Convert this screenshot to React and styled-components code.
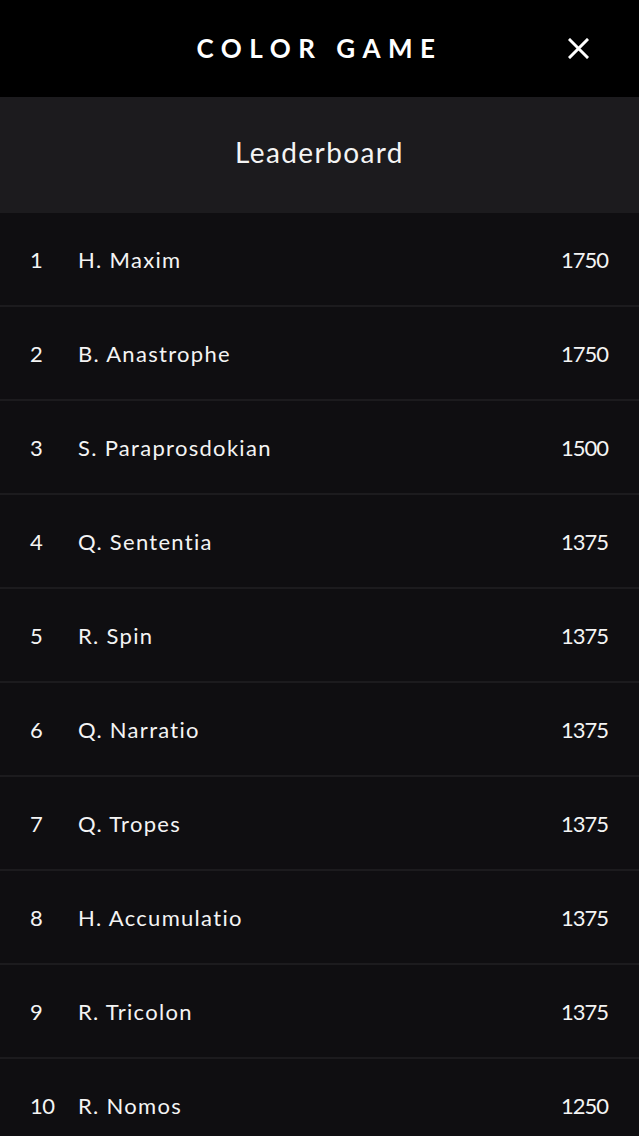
import React from 'react';
import styled, { createGlobalStyle } from 'styled-components';

const GlobalStyle = createGlobalStyle`
  html, body {
    margin: 0;
    padding: 0;
    background: #0f0e11;
  }
  body {
    font-family: Lato, "Open Sans", sans-serif;
    font-variant-ligatures: none;
    color: #f4f4f4;
  }
`

const Page = styled.div`
  width: 639px;
  min-height: 1136px;
  background: #0f0e11;
  overflow: hidden;
`

const TopBar = styled.header`
  height: 97px;
  background: #000;
  display: flex;
  align-items: center;
  justify-content: center;
  position: relative;
`

const Brand = styled.h1`
  margin: 0 0 2px 0;
  font-family: Lato, sans-serif;
  font-weight: 700;
  font-size: 26px;
  letter-spacing: 7.5px;
  color: #fff;
`

const CloseButton = styled.button`
  position: absolute;
  right: 50px;
  top: 38px;
  width: 21px;
  height: 21px;
  padding: 0;
  border: none;
  background: none;
  cursor: pointer;
  display: flex;
`

const Heading = styled.div`
  height: 116px;
  background: #1c1b1e;
  display: flex;
  align-items: center;
  justify-content: center;
`

const HeadingText = styled.h2`
  margin: 0 0 6px 0;
  font-family: Lato, sans-serif;
  font-weight: 400;
  font-size: 28px;
  letter-spacing: 1.4px;
  color: #f4f4f4;
`

const List = styled.ol`
  list-style: none;
  margin: 0;
  padding: 0;
`

const Row = styled.li`
  height: 92px;
  display: flex;
  align-items: center;
  padding: 0 31px 0 30px;
  background: #0f0e11;
  border-bottom: 2px solid #1c1b1e;
  font-size: 22px;
  color: #f4f4f4;
`

const Rank = styled.span`
  width: 48px;
  letter-spacing: -0.5px;
`

const Name = styled.span`
  flex: 1;
  letter-spacing: 1.3px;
`

const Score = styled.span`
  text-align: right;
  letter-spacing: -1px;
`

const players = [
  ['H. Maxim', 1750],
  ['B. Anastrophe', 1750],
  ['S. Paraprosdokian', 1500],
  ['Q. Sententia', 1375],
  ['R. Spin', 1375],
  ['Q. Narratio', 1375],
  ['Q. Tropes', 1375],
  ['H. Accumulatio', 1375],
  ['R. Tricolon', 1375],
  ['R. Nomos', 1250],
]

function CloseIcon() {
  return (
    <svg width="21" height="21" viewBox="0 0 21 21">
      <path d="M2 2 L19 19 M19 2 L2 19" stroke="#fff" strokeWidth="3" strokeLinecap="square" />
    </svg>
  )
}

export default function App() {
  return (
    <Page>
      <GlobalStyle />
      <TopBar>
        <Brand>COLOR GAME</Brand>
        <CloseButton aria-label="Close"><CloseIcon /></CloseButton>
      </TopBar>
      <Heading>
        <HeadingText>Leaderboard</HeadingText>
      </Heading>
      <List>
        {players.map(([name, score], i) => (
          <Row key={name}>
            <Rank>{i + 1}</Rank>
            <Name>{name}</Name>
            <Score>{score}</Score>
          </Row>
        ))}
      </List>
    </Page>
  )
}
